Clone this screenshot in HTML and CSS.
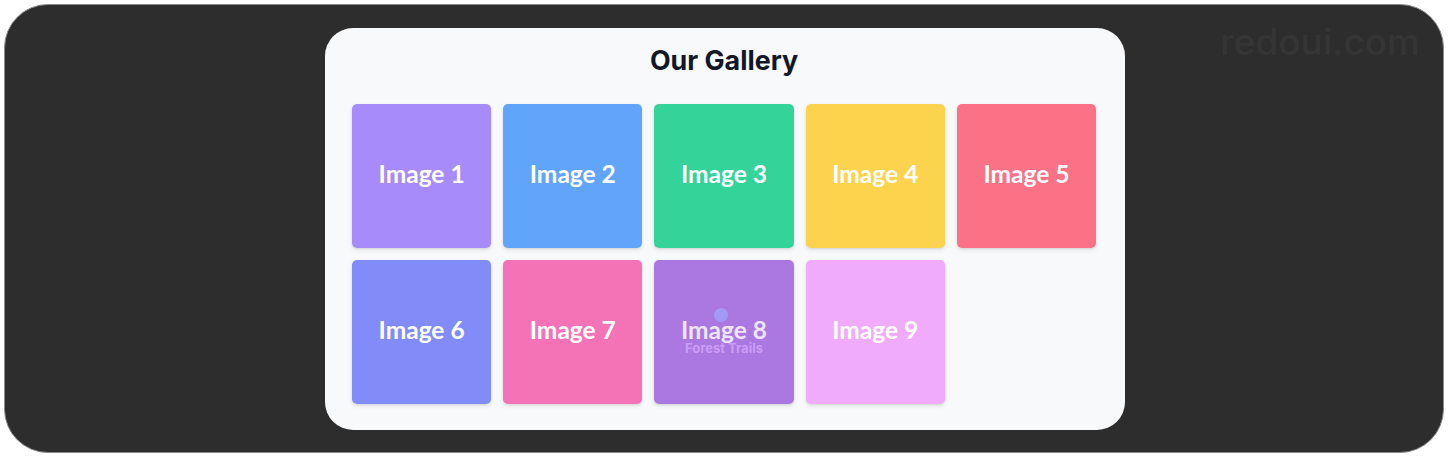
FILE: index.html
```html
<!DOCTYPE html>
<html lang="en">
<head>
<meta charset="utf-8">
<title>Our Gallery</title>
<link rel="stylesheet" href="styles.css">
</head>
<body>
<div class="frame">
  <div class="watermark">redoui.com</div>
  <section class="card">
    <h1 class="title">Our Gallery</h1>
    <div class="grid">
      <div class="tile c1"><span class="label">Image 1</span></div>
      <div class="tile c2"><span class="label">Image 2</span></div>
      <div class="tile c3"><span class="label">Image 3</span></div>
      <div class="tile c4"><span class="label">Image 4</span></div>
      <div class="tile c5"><span class="label">Image 5</span></div>
      <div class="tile c6"><span class="label">Image 6</span></div>
      <div class="tile c7"><span class="label">Image 7</span></div>
      <div class="tile c8 hovered">
        <span class="label">Image 8</span>
        <span class="dot"></span>
        <span class="caption">Forest Trails</span>
      </div>
      <div class="tile c9"><span class="label">Image 9</span></div>
    </div>
  </section>
</div>
</body>
</html>
```

FILE: styles.css
```css
* { box-sizing: border-box; }
html, body { margin: 0; padding: 0; background: #ffffff; }
body { padding: 4px 5px 6px 4px; height: 459px; }

.frame {
  position: relative;
  height: 449px;
  background: #2d2d2d;
  border: 1px solid #8a8a8a;
  border-radius: 44px;
  display: flex;
  align-items: center;
  justify-content: center;
}

.watermark {
  position: absolute;
  top: 18px;
  right: 23px;
  font-family: "Inter", sans-serif;
  font-size: 37px;
  line-height: 1;
  font-weight: 500;
  color: #353535;
}

.card {
  width: 800px;
  height: 402px;
  margin-left: 2px;
  background: #f8f9fb;
  border-radius: 28px;
  padding: 16px 29px 26px 27px;
}

.title {
  margin: 0 0 27px;
  text-align: center;
  font-family: "Inter", sans-serif;
  font-weight: 700;
  font-size: 26.8px;
  line-height: 33px;
  color: #111827;
}

.grid {
  display: grid;
  grid-template-columns: repeat(5, 1fr);
  grid-auto-rows: 144px;
  gap: 12px;
}

.tile {
  position: relative;
  border-radius: 5px;
  display: flex;
  align-items: center;
  justify-content: center;
  box-shadow: 0 2px 4px rgba(0,0,0,0.10), 0 1px 2px rgba(0,0,0,0.06);
}

.label {
  font-family: "Lato", sans-serif;
  font-weight: 700;
  font-size: 24.5px;
  color: #ffffff;
  margin-top: -4px;
}

.c1 { background: #a78bfa; }
.c2 { background: #60a5fa; }
.c3 { background: #34d399; }
.c4 { background: #fcd34d; }
.c5 { background: #fb7185; }
.c6 { background: #818cf8; }
.c7 { background: #f472b6; }
.c8 { background: #ab78e2; }
.c9 { background: #f0abfc; }

.hovered .label { color: rgba(255,255,255,0.82); }

.dot {
  position: absolute;
  left: 60px;
  top: 48px;
  width: 14px;
  height: 14px;
  border-radius: 50%;
  background: rgba(160,160,250,0.85);
}

.caption {
  position: absolute;
  left: 0;
  right: 0;
  top: 80px;
  text-align: center;
  font-family: "Inter", sans-serif;
  font-weight: 700;
  font-size: 13px;
  color: rgba(215,170,255,0.75);
}
```
